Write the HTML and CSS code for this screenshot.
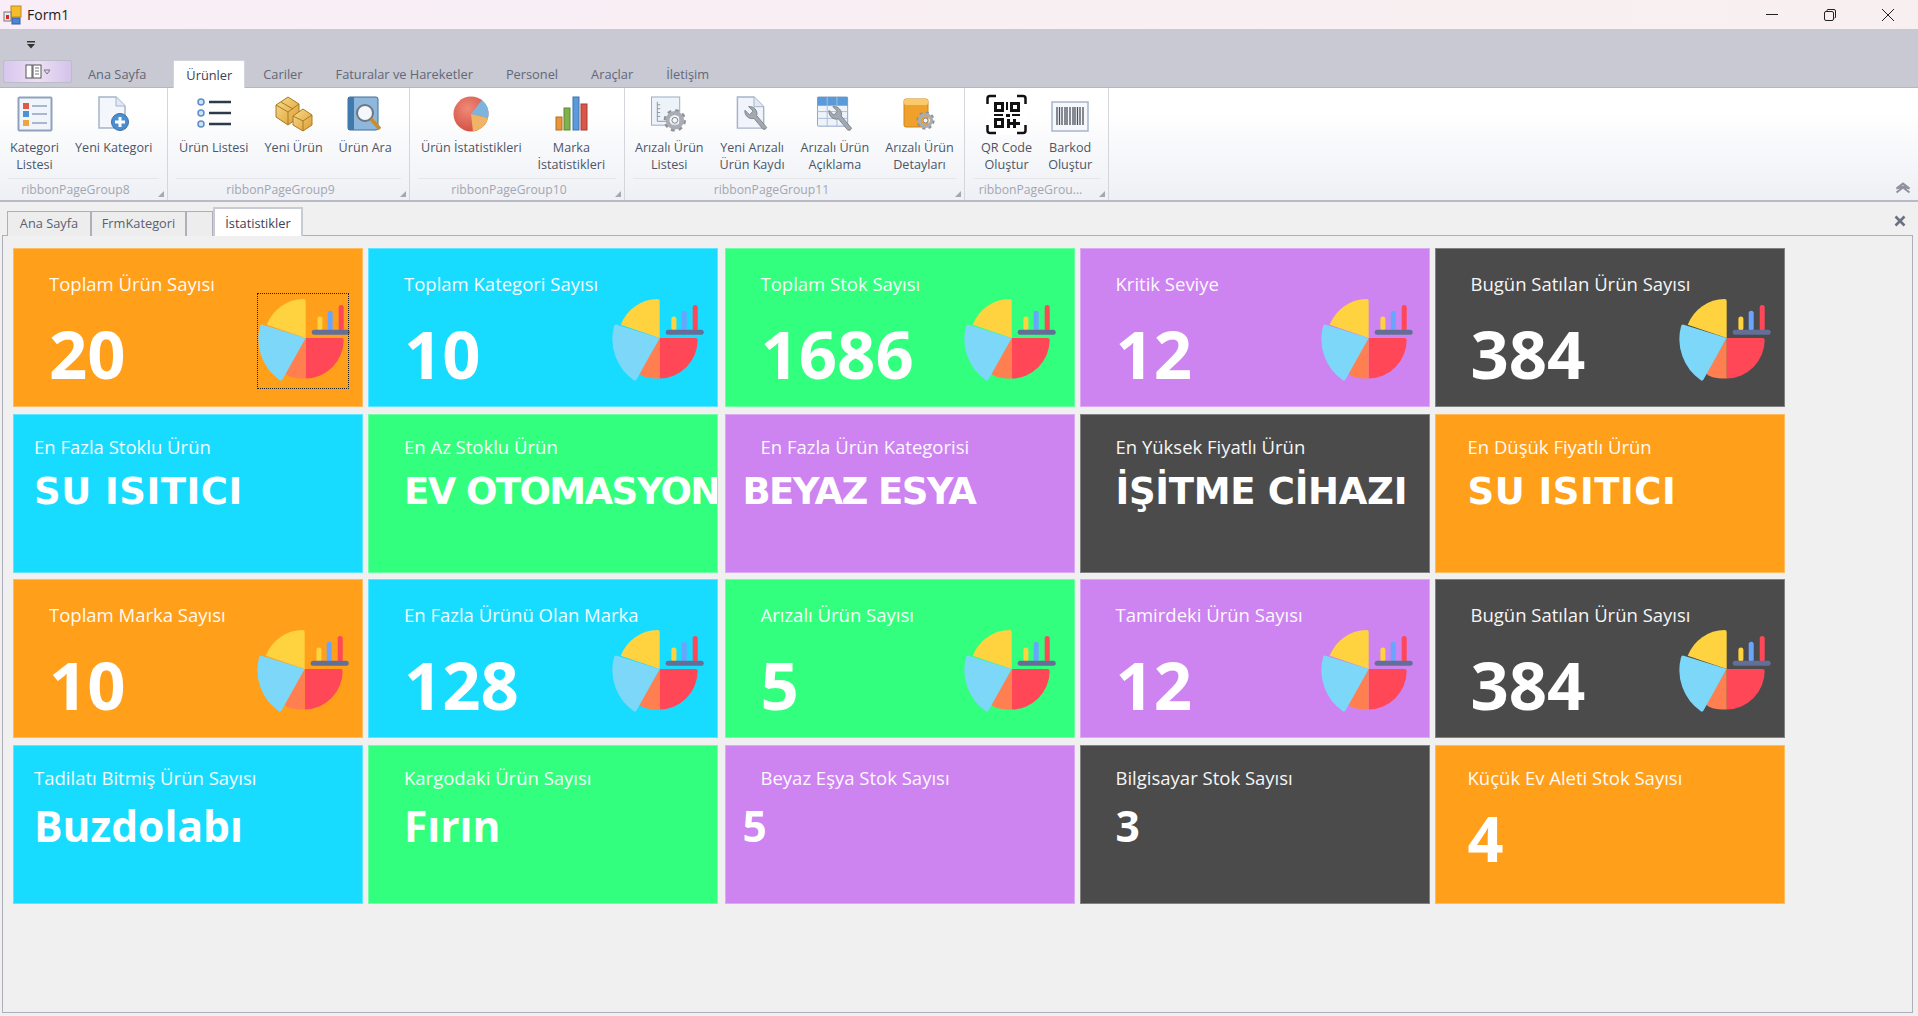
FILE: index.html
```html
<!DOCTYPE html>
<html lang="en">
<head>
    <meta charset="UTF-8">
    <title>Form1</title>
    <link rel="stylesheet" href="styles.css">
</head>
<body>
    <svg class="defs" width="0" height="0">
        <defs>
            <radialGradient id="redball" cx="0.4" cy="0.35" r="0.75">
                <stop offset="0" stop-color="#f08a78"/>
                <stop offset="1" stop-color="#cf4a3e"/>
            </radialGradient>
            <linearGradient id="gold" x1="0" y1="0" x2="1" y2="1">
                <stop offset="0" stop-color="#f9dc8c"/>
                <stop offset="1" stop-color="#dc9d32"/>
            </linearGradient>
        </defs>
        <symbol id="pie" viewBox="0 0 92 84">
            <path d="M47.7 39 L8.7 25.7 A40 40 0 0 1 45.7 0 Q47.700 0 47.700 2 Z" fill="#fed33f"/>
            <path d="M47.7 39 L83.4 39 Q85.7 39 85.7 41 A38.500 38.500 0 0 1 47.7 79.500 Z" fill="#ff4757"/>
            <path d="M47.7 39 L27 74 Q30 79.500 47.700 79.500 Z" fill="#ff7f50"/>
            <path d="M47.7 39 L4.7 25.7 Q2.4 25.2 2 27.5 A50 50 0 0 0 21.5 81 Q23.4 82.5 24.5 80.5 Z" fill="#7dd7f8"/>
            <rect x="59.4" y="17.4" width="5" height="14" rx="2.5" fill="#fed33f"/>
            <rect x="69.7" y="11.7" width="5" height="20" rx="2.5" fill="#69a5ff"/>
            <rect x="80.7" y="6" width="5" height="26" rx="2.5" fill="#ff4757"/>
            <rect x="53.7" y="30.7" width="38" height="5" rx="2.5" fill="#636f96"/>
        </symbol>
        <symbol id="gear" viewBox="0 0 24 24">
            <circle cx="12" cy="12" r="9.5" fill="none" stroke="#8d9299" stroke-width="4" stroke-dasharray="3.7 3.76"/>
            <circle cx="12" cy="12" r="7.5" fill="none" stroke="#a9adb3" stroke-width="4"/>
            <circle cx="12" cy="12" r="3" fill="#f3f4f6" stroke="#7d8188"/>
        </symbol>
        <symbol id="wrench" viewBox="0 0 28 28">
            <path d="M3 5 A8 8 0 0 0 13 14 L23 26 Q26 27 27 24 L16 11 A8 8 0 0 0 7 1 L12 6 L8 10 Z" fill="#a3a9b1" stroke="#7c828a"/>
        </symbol>
    </svg>

    <div class="titlebar">
        <svg class="app-icon" width="19" height="20" viewBox="0 0 19 20">
            <rect x="8" y="1" width="10" height="11" fill="#f5bd2c" stroke="#b98a1c"/>
            <rect x="1" y="7" width="7" height="9" fill="#e8e8e8" stroke="#777"/>
            <rect x="3" y="10" width="3" height="4" fill="#d42c2c"/>
            <rect x="9" y="13" width="8" height="6" fill="#4d84d8" stroke="#345c9c"/>
        </svg>
        <span class="title-text">Form1</span>
        <div class="win-buttons">
            <svg width="14" height="14" viewBox="0 0 14 14"><path d="M1 6.5H13" stroke="#222" stroke-width="1"/></svg>
            <svg width="14" height="14" viewBox="0 0 14 14"><rect x="1.5" y="3.5" width="9" height="9" rx="1.5" fill="none" stroke="#222"/><path d="M4 3 V2.5 Q4 1.5 5 1.5 H11 Q12.5 1.5 12.5 3 V9 Q12.5 10 11.5 10" fill="none" stroke="#222"/></svg>
            <svg width="14" height="14" viewBox="0 0 14 14"><path d="M1 1L13 13M13 1L1 13" stroke="#222" stroke-width="1"/></svg>
        </div>
    </div>

    <div class="ribbon-head">
        <div class="qat">
            <svg width="10" height="8" viewBox="0 0 10 8"><path d="M1 0H9V1.5H1ZM1 3H9L5 7.5Z" fill="#333"/></svg>
        </div>
        <div class="ribbon-tabs">
            <div class="app-button">
                <svg width="26" height="16" viewBox="0 0 26 16"><rect x="1" y="1" width="6" height="13" fill="#fff" stroke="#555"/><rect x="8" y="1" width="8" height="13" fill="#fff" stroke="#555"/><path d="M10 4H14M10 7H14M10 10H14" stroke="#777"/><path d="M19 6H25L22 10Z" fill="none" stroke="#777"/></svg>
            </div>
            <div class="r-tab home">Ana Sayfa</div>
            <div class="r-tab active">Ürünler</div>
            <div class="r-tab">Cariler</div>
            <div class="r-tab">Faturalar ve Hareketler</div>
            <div class="r-tab">Personel</div>
            <div class="r-tab">Araçlar</div>
            <div class="r-tab">İletişim</div>
        </div>
    </div>

    <div class="ribbon">
        <div class="group g8">
            <div class="items">
                <div class="item">
                    <svg class="ico" width="36" height="36" viewBox="0 0 36 36"><rect x="1.5" y="1.5" width="33" height="33" rx="1" fill="#f1f4fa" stroke="#8fa2bd" stroke-width="2"/><rect x="6" y="7" width="6" height="6" fill="#dc5b45"/><rect x="6" y="15" width="6" height="6" fill="#4d94d6"/><rect x="6" y="24" width="6" height="6" fill="#eca63c"/><path d="M15 10H30M15 18H30M15 27H30" stroke="#8fa2bd" stroke-width="1.5"/></svg>
                    <span>Kategori<br>Listesi</span>
                </div>
                <div class="item">
                    <svg class="ico" width="36" height="36" viewBox="0 0 36 36"><path d="M3 1H20L29 10V32H3Z" fill="#f3f6fb" stroke="#a5b4ca" stroke-width="1.5"/><path d="M20 1V10H29" fill="#e3e9f3" stroke="#a5b4ca"/><circle cx="24" cy="26" r="8.5" fill="#4a8fd0" stroke="#3a6fa8"/><path d="M24 21V31M19 26H29" stroke="#fff" stroke-width="3"/></svg>
                    <span>Yeni Kategori</span>
                </div>
            </div>
            <div class="caption">ribbonPageGroup8<i class="launcher"></i></div>
        </div>
        <div class="group g9">
            <div class="items">
                <div class="item">
                    <svg class="ico" width="36" height="36" viewBox="0 0 36 36"><g fill="#cfe0f4" stroke="#5c8fc6" stroke-width="1.5"><circle cx="5" cy="6" r="3"/><circle cx="5" cy="17" r="3"/><circle cx="5" cy="28" r="3"/></g><path d="M13 6H35M13 17H35M13 28H35" stroke="#2c3a4e" stroke-width="2.5"/></svg>
                    <span>Ürün Listesi</span>
                </div>
                <div class="item">
                    <svg class="ico" width="38" height="36" viewBox="0 0 38 36"><path d="M1 9L13 1L24 8V21L13 29L1 21Z" fill="url(#gold)" stroke="#a87a22"/><path d="M1 9L13 16V29M13 16L24 8M6 6L18 13" fill="none" stroke="#a87a22"/><path d="M18 20L28 13L37 19V29L28 35L18 29Z" fill="url(#gold)" stroke="#a87a22"/><path d="M18 20L28 25L37 19M28 25V35" fill="none" stroke="#a87a22"/></svg>
                    <span>Yeni Ürün</span>
                </div>
                <div class="item">
                    <svg class="ico" width="36" height="36" viewBox="0 0 36 36"><rect x="1" y="1" width="30" height="33" rx="2" fill="#8fb7dc" stroke="#3f6f9e"/><rect x="1" y="1" width="6" height="33" fill="#3f79ae"/><circle cx="18" cy="17" r="8" fill="#f4f8fc" stroke="#6d7683" stroke-width="2"/><path d="M24 23L33 33" stroke="#c98d2a" stroke-width="3.500"/></svg>
                    <span>Ürün Ara</span>
                </div>
            </div>
            <div class="caption">ribbonPageGroup9<i class="launcher"></i></div>
        </div>
        <div class="group g10">
            <div class="items">
                <div class="item">
                    <svg class="ico" width="36" height="36" viewBox="0 0 36 36"><circle cx="18" cy="18" r="17.500" fill="url(#redball)"/><path d="M18 18L29 4A17.500 17.500 0 0 1 35 22Z" fill="#7db4de"/><path d="M18 18L35 22A17.500 17.500 0 0 1 20 35.400Z" fill="#f0b564"/></svg>
                    <span>Ürün İstatistikleri</span>
                </div>
                <div class="item">
                    <svg class="ico" width="33" height="36" viewBox="0 0 33 36"><rect x="1" y="21" width="6" height="13" fill="#e9963a" stroke="#b56e20"/><rect x="9" y="12" width="6" height="22" fill="#7eb24d" stroke="#5a8a30"/><rect x="18" y="1" width="6" height="33" fill="#5b9bdc" stroke="#3d74ae"/><rect x="26" y="8" width="6" height="26" fill="#d9574a" stroke="#a83a30"/></svg>
                    <span>Marka<br>İstatistikleri</span>
                </div>
            </div>
            <div class="caption">ribbonPageGroup10<i class="launcher"></i></div>
        </div>
        <div class="group g11">
            <div class="items">
                <div class="item">
                    <svg class="ico" width="38" height="37" viewBox="0 0 38 37"><rect x="1" y="1" width="29" height="29" fill="#eef2f9" stroke="#9aacc5"/><path d="M7 6V26H18M7 9H10M7 13H10M7 17H10M7 21H10" fill="none" stroke="#8b97a8"/><use href="#gear" x="13" y="13" width="24" height="24"/></svg>
                    <span>Arızalı Ürün<br>Listesi</span>
                </div>
                <div class="item">
                    <svg class="ico" width="32" height="37" viewBox="0 0 32 37"><path d="M1 1H18L28 11V33H1Z" fill="#f1f4fa" stroke="#a5b4ca" stroke-width="1.5"/><path d="M18 1V11H28" fill="#e3e9f3" stroke="#a5b4ca"/><use href="#wrench" x="6" y="9" width="26" height="28"/></svg>
                    <span>Yeni Arızalı<br>Ürün Kaydı</span>
                </div>
                <div class="item">
                    <svg class="ico" width="38" height="37" viewBox="0 0 38 37"><rect x="1" y="1" width="31" height="30" rx="1" fill="#eef3fa" stroke="#8ea6c6"/><rect x="1" y="1" width="31" height="9" fill="#5a9ad8"/><path d="M11 1V31M21 1V31M1 16H32M1 23H32" stroke="#a8bdd8"/><use href="#wrench" x="10" y="10" width="27" height="27"/></svg>
                    <span>Arızalı Ürün<br>Açıklama</span>
                </div>
                <div class="item">
                    <svg class="ico" width="32" height="36" viewBox="0 0 32 36"><rect x="1" y="3" width="24" height="28" rx="2" fill="#efa12c" stroke="#cd8618"/><rect x="1" y="3" width="24" height="6" rx="2" fill="#f9ca6a"/><use href="#gear" x="13" y="15" width="19" height="19"/></svg>
                    <span>Arızalı Ürün<br>Detayları</span>
                </div>
            </div>
            <div class="caption">ribbonPageGroup11<i class="launcher"></i></div>
        </div>
        <div class="group g12">
            <div class="items">
                <div class="item">
                    <svg class="ico qr" width="41" height="41" viewBox="0 0 41 41"><rect width="41" height="41" fill="#fff"/><path d="M10 2H4Q1.500 2 1.500 4.500V10M31 2H37Q39.500 2 39.500 4.500V10M10 39H4Q1.500 39 1.500 36.500V31M31 39H37Q39.500 39 39.500 36.500V31" fill="none" stroke="#111" stroke-width="2.500"/><path d="M8 8H18V18H8ZM11 11V15H15V11ZM24 8H34V18H24ZM27 11V15H31V11ZM8 24H18V34H8ZM11 27V31H15V27ZM20 8H22V16H20ZM20 20H24V23H20ZM26 20H34V22H26ZM8 20H17V22H8ZM21 25H24V28H27V25H30V28H34V31H30V34H27V31H24V34H21Z" fill="#111" fill-rule="evenodd"/></svg>
                    <span>QR Code<br>Oluştur</span>
                </div>
                <div class="item">
                    <svg class="ico bar" width="38" height="31" viewBox="0 0 38 31"><rect x="1" y="1" width="36" height="29" fill="#f6f8fc" stroke="#a7b5cb" stroke-width="1.500"/><path d="M6 6V24M8.500 6V24M11 6V24M14 6V24M16 6V24M19 6V24M22 6V24M24 6V24M26.500 6V24M29 6V24M32 6V24" stroke="#4a4f59" stroke-width="1.300"/></svg>
                    <span>Barkod<br>Oluştur</span>
                </div>
            </div>
            <div class="caption">ribbonPageGrou...<i class="launcher"></i></div>
        </div>
        <svg class="collapse" width="16" height="12" viewBox="0 0 16 12"><path d="M1.500 6.500L8 1.500L14.500 6.500L8 4.500ZM1.500 10.500L8 5.500L14.500 10.500" fill="none" stroke="#8f929c" stroke-width="2"/></svg>
    </div>

    <div class="doc-tabs">
        <div class="d-tab t-home">Ana Sayfa</div>
        <div class="d-tab t-cat">FrmKategori</div>
        <div class="d-tab empty"></div>
        <div class="d-tab active">İstatistikler</div>
        <svg class="doc-close" width="12" height="12" viewBox="0 0 12 12"><path d="M1.500 1.500L10.500 10.500M10.500 1.500L1.500 10.500" stroke="#6c7080" stroke-width="2.600"/></svg>
    </div>

    <div class="panel">
        <div class="board">
            <div class="card orange stat">
                <div class="label">Toplam Ürün Sayısı</div>
                <div class="value">20</div>
                <div class="chart focused"><svg width="92" height="84"><use href="#pie"/></svg></div>
            </div>
            <div class="card cyan stat">
                <div class="label">Toplam Kategori Sayısı</div>
                <div class="value">10</div>
                <div class="chart"><svg width="92" height="84"><use href="#pie"/></svg></div>
            </div>
            <div class="card green stat">
                <div class="label">Toplam Stok Sayısı</div>
                <div class="value">1686</div>
                <div class="chart"><svg width="92" height="84"><use href="#pie"/></svg></div>
            </div>
            <div class="card purple stat">
                <div class="label">Kritik Seviye</div>
                <div class="value">12</div>
                <div class="chart"><svg width="92" height="84"><use href="#pie"/></svg></div>
            </div>
            <div class="card dark stat">
                <div class="label">Bugün Satılan Ürün Sayısı</div>
                <div class="value">384</div>
                <div class="chart"><svg width="92" height="84"><use href="#pie"/></svg></div>
            </div>

            <div class="card cyan name pad-a">
                <div class="label">En Fazla Stoklu Ürün</div>
                <div class="value loose">SU ISITICI</div>
            </div>
            <div class="card green name">
                <div class="label">En Az Stoklu Ürün</div>
                <div class="value tight">EV OTOMASYONU</div>
            </div>
            <div class="card purple name">
                <div class="label">En Fazla Ürün Kategorisi</div>
                <div class="value out tight">BEYAZ ESYA</div>
            </div>
            <div class="card dark name">
                <div class="label">En Yüksek Fiyatlı Ürün</div>
                <div class="value">İŞİTME CİHAZI</div>
            </div>
            <div class="card orange name pad-c">
                <div class="label">En Düşük Fiyatlı Ürün</div>
                <div class="value loose">SU ISITICI</div>
            </div>

            <div class="card orange stat">
                <div class="label">Toplam Marka Sayısı</div>
                <div class="value">10</div>
                <div class="chart"><svg width="92" height="84"><use href="#pie"/></svg></div>
            </div>
            <div class="card cyan stat">
                <div class="label">En Fazla Ürünü Olan Marka</div>
                <div class="value">128</div>
                <div class="chart"><svg width="92" height="84"><use href="#pie"/></svg></div>
            </div>
            <div class="card green stat">
                <div class="label">Arızalı Ürün Sayısı</div>
                <div class="value">5</div>
                <div class="chart"><svg width="92" height="84"><use href="#pie"/></svg></div>
            </div>
            <div class="card purple stat">
                <div class="label">Tamirdeki Ürün Sayısı</div>
                <div class="value">12</div>
                <div class="chart"><svg width="92" height="84"><use href="#pie"/></svg></div>
            </div>
            <div class="card dark stat">
                <div class="label">Bugün Satılan Ürün Sayısı</div>
                <div class="value">384</div>
                <div class="chart"><svg width="92" height="84"><use href="#pie"/></svg></div>
            </div>

            <div class="card cyan small pad-a">
                <div class="label">Tadilatı Bitmiş Ürün Sayısı</div>
                <div class="value">Buzdolabı</div>
            </div>
            <div class="card green small">
                <div class="label">Kargodaki Ürün Sayısı</div>
                <div class="value">Fırın</div>
            </div>
            <div class="card purple small">
                <div class="label">Beyaz Eşya Stok Sayısı</div>
                <div class="value out">5</div>
            </div>
            <div class="card dark small">
                <div class="label">Bilgisayar Stok Sayısı</div>
                <div class="value">3</div>
            </div>
            <div class="card orange small big pad-c">
                <div class="label">Küçük Ev Aleti Stok Sayısı</div>
                <div class="value">4</div>
            </div>
        </div>
    </div>
</body>
</html>
```

FILE: styles.css
```css
* {
    box-sizing: border-box;
}
html, body {
    margin: 0;
    height: 100%;
}
body {
    width: 1918px;
    height: 1016px;
    overflow: hidden;
    background-color: #f0f0f0;
    font-family: "Open Sans", "Noto Sans", sans-serif;
    font-size: 12.6px;
    color: #4c5568;
    display: flex;
    flex-direction: column;
}
.defs {
    position: absolute;
}

/* window title */
.titlebar {
    height: 29px;
    display: flex;
    align-items: center;
    padding-left: 3px;
    background: linear-gradient(to right, #f9eef7, #f8f0f0);
}
.app-icon {
    margin-right: 5px;
}
.title-text {
    font-size: 14px;
    color: #1c1c1c;
}
.win-buttons {
    margin-left: auto;
    display: flex;
    gap: 44px;
    padding-right: 23px;
}

/* ribbon */
.ribbon-head {
    height: 59px;
    background-color: #c8c9d2;
    border-bottom: 1px solid #b5b6c0;
    display: flex;
    flex-direction: column;
}
.qat {
    height: 32px;
    padding: 7px 0 0 26px;
}
.ribbon-tabs {
    display: flex;
    height: 27px;
    padding-left: 3px;
    gap: 9px;
}
.app-button {
    width: 69px;
    height: 23px;
    margin-right: -5px;
    border: 1px solid #bcbdc8;
    border-radius: 2px;
    background: linear-gradient(to right, #d8c6ee, #ecdff5 50%, #d4c3ea);
    display: flex;
    align-items: center;
    justify-content: center;
}
.r-tab {
    padding: 0 12px;
    line-height: 29px;
    font-size: 12.8px;
    color: #62677a;
    white-space: nowrap;
}
.r-tab.home {
    margin-right: 6px;
}
.r-tab.active {
    height: 28px;
    margin-right: -3px;
    background-color: #fff;
    color: #3c4252;
    border: 1px solid #d4d5dc;
    border-bottom: 0;
    border-radius: 2px 2px 0 0;
    line-height: 28px;
}
.ribbon {
    position: relative;
    height: 114px;
    display: flex;
    background: linear-gradient(to bottom, #fff 20%, #eef0f5);
    border-bottom: 2px solid #b9bac5;
}
.group {
    height: 112px;
    display: flex;
    flex-direction: column;
    border-right: 1px solid #d4d6dc;
}
.g8 { width: 168px; }
.g9 { width: 242px; }
.g10 { width: 215px; }
.g11 { width: 340px; }
.g12 { width: 144px; }
.items {
    height: 91px;
    padding: 8px 0 0 11px;
    display: flex;
    gap: 16px;
    text-align: center;
}
.g8 .items {
    padding-left: 10px;
}
.g11 .items {
    padding-left: 10px;
}
.g12 .items {
    padding-left: 16px;
}
.item {
    display: flex;
    flex-direction: column;
    align-items: center;
    line-height: 16.5px;
    color: #4c5568;
    white-space: nowrap;
}
.ico {
    height: 36px;
    margin: 0 0 8px;
    flex: none;
}
.ico.qr {
    height: 41px;
    margin: -2px 0 5px;
}
.ico.bar {
    margin: 5px 0 8px;
    height: 31px;
}
.caption {
    position: relative;
    margin: 0 8px;
    padding-right: 16px;
    border-top: 1px solid #e5e6ea;
    text-align: center;
    font-size: 12.2px;
    line-height: 21px;
    color: #a3a6b2;
}
.g11 .caption {
    padding-right: 46px;
}
.g12 .caption {
    padding-right: 12px;
}
.launcher {
    position: absolute;
    right: -5px;
    bottom: 3px;
    width: 0;
    height: 0;
    border: 3.5px solid transparent;
    border-right-color: #a5a8b2;
    border-bottom-color: #a5a8b2;
}
.collapse {
    position: absolute;
    right: 7px;
    bottom: 6px;
}

/* document tabs */
.doc-tabs {
    position: relative;
    height: 33px;
    display: flex;
    align-items: flex-end;
    padding-left: 7px;
}
.d-tab {
    height: 25px;
    line-height: 23px;
    font-size: 12.8px;
    text-align: center;
    background-color: #ededee;
    border: 1px solid #aeafbb;
    border-bottom: 0;
    color: #5a5f70;
    margin-bottom: -1px;
}
.t-home { width: 84px; }
.t-cat { width: 95px; }
.d-tab.empty {
    width: 27px;
}
.d-tab.active {
    width: 90px;
    height: 29px;
    line-height: 28px;
    background-color: #fff;
    color: #3c4252;
    border: 2px solid #c9cad3;
    border-bottom: 0;
    position: relative;
    z-index: 1;
}
.doc-close {
    position: absolute;
    right: 12px;
    top: 13px;
}

/* cards */
.panel {
    flex: 1;
    margin: 0 5px 3px 2px;
    border: 1.5px solid #aeafbb;
    padding: 12px 0 0 10px;
}
.board {
    display: grid;
    grid-template-columns: 355px 356.5px 355px 355px 350px;
    grid-template-rows: 166px 165px 166px 159px;
}
.card {
    position: relative;
    width: 350px;
    height: 159px;
    overflow: hidden;
    padding-left: 35px;
    color: #fff;
    border: 1px solid rgba(255, 255, 255, 0.3);
}
.orange { background-color: #ff9f1a; }
.cyan { background-color: #18dcff; }
.green { background-color: #32ff7e; }
.purple { background-color: #cd84f1; }
.dark { background-color: #4b4b4b; }
.pad-a { padding-left: 20px; }
.pad-c { padding-left: 32px; }
.label {
    font-size: 18.5px;
    line-height: 24px;
    white-space: nowrap;
    opacity: 0.95;
}
.value {
    font-weight: 700;
    white-space: nowrap;
}
.value.out {
    margin-left: -18px;
}
.stat {
    padding-top: 23px;
}
.stat .value {
    margin-top: 27px;
    font-size: 67px;
    line-height: 60px;
}
.name {
    padding-top: 20px;
}
.name .value {
    margin-top: 8px;
    font-family: "DejaVu Sans", sans-serif;
    font-size: 37px;
    letter-spacing: -0.3px;
    line-height: 50px;
}
.name .value.tight {
    letter-spacing: -1.6px;
}
.name .value.loose {
    letter-spacing: 0.5px;
}
.small {
    padding-top: 20px;
}
.small .value {
    margin-top: 11px;
    font-size: 42.5px;
    line-height: 50px;
}
.small.big .value {
    margin-top: 13px;
    font-size: 63px;
    line-height: 70px;
}
.chart {
    position: absolute;
    left: 243px;
    top: 50px;
    width: 92px;
    height: 84px;
}
.green .chart {
    left: 238px;
}
.purple .chart {
    left: 240px;
}
.chart svg {
    display: block;
}
.chart.focused {
    left: 244px;
    top: 45px;
    width: 90px;
    height: 94px;
    padding-top: 5px;
    outline: 1px dotted #222;
}
```
